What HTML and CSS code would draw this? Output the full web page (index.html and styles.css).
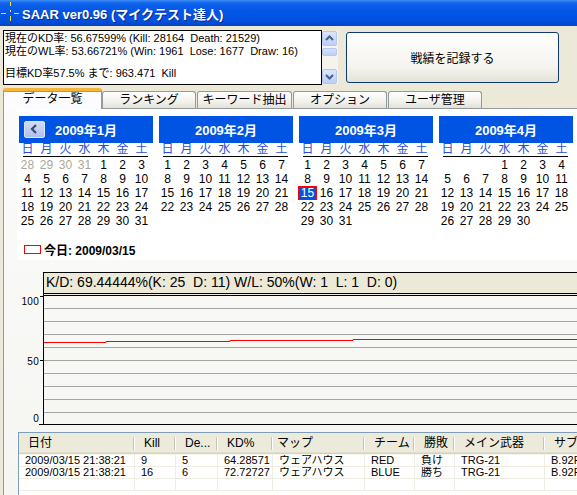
FILE: index.html
```html
<!DOCTYPE html>
<html lang="ja">
<head>
<meta charset="utf-8">
<title>SAAR ver0.96</title>
<link rel="stylesheet" href="styles.css">
</head>
<body>
<div class="titlebar">
  <svg class="app-icon" width="20" height="24" viewBox="0 0 20 24">
    <g stroke="#F2E43A" stroke-width="1">
      <line x1="1" y1="12.5" x2="6" y2="12.5"/>
      <line x1="14" y1="12.5" x2="19" y2="12.5"/>
      <line x1="10.5" y1="1" x2="10.5" y2="5"/>
      <line x1="10.5" y1="9" x2="10.5" y2="11"/>
      <line x1="10.5" y1="15" x2="10.5" y2="20"/>
    </g>
  </svg>
  <span class="title">SAAR ver0.96 (マイクテスト達人)</span>
</div>

<div class="top">
  <div class="stats">
    <div class="stats-box">
      <div class="line">現在のKD率: 56.67599% (Kill: 28164&nbsp; Death: 21529)</div>
      <div class="line">現在のWL率: 53.66721% (Win: 1961&nbsp; Lose: 1677&nbsp; Draw: 16)</div>
      <div class="blank"></div>
      <div class="line">目標KD率57.5% まで: 963.471&nbsp; Kill</div>
    </div>
    <div class="vscroll">
      <div class="sb-btn">
        <svg width="15" height="15" viewBox="0 0 15 15"><polyline points="4,9 7.5,5.5 11,9" fill="none" stroke="#4D6185" stroke-width="2"/></svg>
      </div>
      <div class="sb-thumb"></div>
      <div class="sb-track"></div>
      <div class="sb-btn">
        <svg width="15" height="15" viewBox="0 0 15 15"><polyline points="4,6 7.5,9.5 11,6" fill="none" stroke="#4D6185" stroke-width="2"/></svg>
      </div>
    </div>
  </div>
  <button class="record-btn">戦績を記録する</button>
</div>

<div class="tabs">
  <div class="tab active">データ一覧</div>
  <div class="tab">ランキング</div>
  <div class="tab wide">キーワード抽出</div>
  <div class="tab">オプション</div>
  <div class="tab">ユーザ管理</div>
</div>

<div class="panel">
  <div class="cal-area">
    <div class="calendars">
      <div class="cal">
        <div class="cal-head">
          <span class="nav-btn"><svg width="21" height="16" viewBox="0 0 21 16"><polyline points="12,4 8,8 12,12" fill="none" stroke="#3A4778" stroke-width="2.2"/></svg></span>
          2009年1月
        </div>
        <div class="dow"><span>日</span><span>月</span><span>火</span><span>水</span><span>木</span><span>金</span><span>土</span></div>
        <div class="dow-line"></div>
        <div class="days">
          <span class="other">28</span><span class="other">29</span><span class="other">30</span><span class="other">31</span><span>1</span><span>2</span><span>3</span>
          <span>4</span><span>5</span><span>6</span><span>7</span><span>8</span><span>9</span><span>10</span>
          <span>11</span><span>12</span><span>13</span><span>14</span><span>15</span><span>16</span><span>17</span>
          <span>18</span><span>19</span><span>20</span><span>21</span><span>22</span><span>23</span><span>24</span>
          <span>25</span><span>26</span><span>27</span><span>28</span><span>29</span><span>30</span><span>31</span>
        </div>
      </div>
      <div class="cal">
        <div class="cal-head">2009年2月</div>
        <div class="dow"><span>日</span><span>月</span><span>火</span><span>水</span><span>木</span><span>金</span><span>土</span></div>
        <div class="dow-line"></div>
        <div class="days">
          <span>1</span><span>2</span><span>3</span><span>4</span><span>5</span><span>6</span><span>7</span>
          <span>8</span><span>9</span><span>10</span><span>11</span><span>12</span><span>13</span><span>14</span>
          <span>15</span><span>16</span><span>17</span><span>18</span><span>19</span><span>20</span><span>21</span>
          <span>22</span><span>23</span><span>24</span><span>25</span><span>26</span><span>27</span><span>28</span>
        </div>
      </div>
      <div class="cal">
        <div class="cal-head">2009年3月</div>
        <div class="dow"><span>日</span><span>月</span><span>火</span><span>水</span><span>木</span><span>金</span><span>土</span></div>
        <div class="dow-line"></div>
        <div class="days">
          <span>1</span><span>2</span><span>3</span><span>4</span><span>5</span><span>6</span><span>7</span>
          <span>8</span><span>9</span><span>10</span><span>11</span><span>12</span><span>13</span><span>14</span>
          <span class="today-cell">15</span><span>16</span><span>17</span><span>18</span><span>19</span><span>20</span><span>21</span>
          <span>22</span><span>23</span><span>24</span><span>25</span><span>26</span><span>27</span><span>28</span>
          <span>29</span><span>30</span><span>31</span>
        </div>
      </div>
      <div class="cal">
        <div class="cal-head">2009年4月</div>
        <div class="dow"><span>日</span><span>月</span><span>火</span><span>水</span><span>木</span><span>金</span><span>土</span></div>
        <div class="dow-line"></div>
        <div class="days">
          <span></span><span></span><span></span><span>1</span><span>2</span><span>3</span><span>4</span>
          <span>5</span><span>6</span><span>7</span><span>8</span><span>9</span><span>10</span><span>11</span>
          <span>12</span><span>13</span><span>14</span><span>15</span><span>16</span><span>17</span><span>18</span>
          <span>19</span><span>20</span><span>21</span><span>22</span><span>23</span><span>24</span><span>25</span>
          <span>26</span><span>27</span><span>28</span><span>29</span><span>30</span>
        </div>
      </div>
    </div>
    <div class="today">
      <span class="today-box"></span>
      <span class="today-text">今日: 2009/03/15</span>
    </div>
  </div>

  <div class="chart">
    <div class="chart-title">K/D: 69.44444%(K: 25&nbsp; D: 11) W/L: 50%(W: 1&nbsp; L: 1&nbsp; D: 0)</div>
    <div class="chart-body">
      <div class="ylabels">
        <span>100</span>
        <span>50</span>
        <span>0</span>
      </div>
      <svg class="plot" width="538" height="130" viewBox="0 0 538 130" preserveAspectRatio="none">
        <g stroke="#A4A4A4" stroke-width="1">
          <line x1="5" y1="12.5" x2="538" y2="12.5"/>
          <line x1="5" y1="25.5" x2="538" y2="25.5"/>
          <line x1="5" y1="38.5" x2="538" y2="38.5"/>
          <line x1="5" y1="51.5" x2="538" y2="51.5"/>
          <line x1="5" y1="64.5" x2="538" y2="64.5"/>
          <line x1="5" y1="77.5" x2="538" y2="77.5"/>
          <line x1="5" y1="90.5" x2="538" y2="90.5"/>
          <line x1="5" y1="103.5" x2="538" y2="103.5"/>
          <line x1="5" y1="116.5" x2="538" y2="116.5"/>
        </g>
        <g stroke="#000" stroke-width="1">
          <line x1="4.5" y1="0" x2="4.5" y2="129"/>
          <line x1="0" y1="128.5" x2="538" y2="128.5"/>
          <line x1="1" y1="64.5" x2="4" y2="64.5"/>
          <line x1="1" y1="0.5" x2="4" y2="0.5"/>
        </g>
        <polyline points="5,46.5 67,46.5 67,45.5 191,45.5 191,44.5 314,44.5 314,43.5 538,43.5" fill="none" stroke="#FF0000" stroke-width="1"/>
      </svg>
    </div>
  </div>

  <div class="listview">
    <div class="lv-row lv-head">
      <div>日付</div><div>Kill</div><div>De...</div><div>KD%</div><div class="h-map">マップ</div><div>チーム</div><div>勝敗</div><div>メイン武器</div><div>サブ武器</div>
    </div>
    <div class="lv-row">
      <div>2009/03/15 21:38:21</div><div>9</div><div>5</div><div>64.28571</div><div>ウェアハウス</div><div>RED</div><div>負け</div><div>TRG-21</div><div>B.92F</div>
    </div>
    <div class="lv-row">
      <div>2009/03/15 21:38:21</div><div>16</div><div>6</div><div>72.72727</div><div>ウェアハウス</div><div>BLUE</div><div>勝ち</div><div>TRG-21</div><div>B.92F</div>
    </div>
    <div class="lv-row empty">
      <div></div><div></div><div></div><div></div><div></div><div></div><div></div><div></div><div></div>
    </div>
  </div>
</div>
</body>
</html>
```

FILE: styles.css
```css
* { box-sizing: border-box; }
html, body { margin: 0; padding: 0; }
body {
  width: 577px;
  height: 495px;
  overflow: hidden;
  background: #ECE9D8;
  font-family: "Liberation Sans", "Noto Sans CJK JP", sans-serif;
  font-size: 12px;
  color: #000;
}

/* title bar */
.titlebar {
  height: 26px;
  display: flex;
  align-items: center;
  background: linear-gradient(#3E8DF6 0%, #0F63EC 12%, #0556E6 40%, #0053E2 75%, #0049D2 92%, #0A44B8 100%);
}
.app-icon { flex: none; margin-right: 2px; }
.title {
  color: #fff;
  font-weight: bold;
  font-size: 13px;
  letter-spacing: 0;
  text-shadow: 1px 1px 0 #0B2B8C;
  white-space: nowrap;
}

/* top area */
.top {
  height: 61px;
  display: flex;
  padding: 4px 0 0 3px;
}
.stats { display: flex; }
.stats-box {
  width: 319px;
  height: 55px;
  border: 1px solid #000;
  background: #fff;
  padding: 1px 0 0 1px;
  font-size: 11px;
  white-space: nowrap;
  overflow: hidden;
}
.line { height: 13px; line-height: 13px; }
.blank { height: 9px; }
.vscroll {
  width: 16px;
  height: 53px;
  margin-top: 1px;
  display: flex;
  flex-direction: column;
  background: #F4F3EC;
}
.sb-btn {
  width: 15px;
  height: 15px;
  border: 1px solid #B4C6F2;
  border-radius: 2px;
  background: linear-gradient(#DCE6FD, #BCCDF6);
}
.sb-btn svg { display: block; margin: -1px; }
.sb-thumb {
  width: 15px;
  height: 8px;
  margin-top: 2px;
  border: 1px solid #B4C6F2;
  border-radius: 2px;
  background: linear-gradient(#D4E0FC, #BFCFF7);
}
.sb-track { flex: 1; }
.record-btn {
  margin: 2px 0 0 8px;
  width: 213px;
  height: 51px;
  border: 1px solid #0B3A70;
  border-radius: 3px;
  background: linear-gradient(#FFFFFF 0%, #F4F3EE 70%, #E4E2D8 100%);
  font-family: "Liberation Sans", "Noto Sans CJK JP", sans-serif;
  font-size: 12px;
  color: #000;
  padding: 0;
}

/* tabs */
.tabs {
  height: 21px;
  display: flex;
  align-items: flex-end;
  gap: 1px;
  padding-left: 3px;
}
.tab {
  width: 94px;
  height: 17px;
  border: 1px solid #919B9C;
  border-bottom: none;
  border-radius: 3px 3px 0 0;
  background: linear-gradient(#FFFFFF, #F2F1EC 60%, #E3E1D8);
  text-align: center;
  line-height: 17px;
  font-size: 12px;
  white-space: nowrap;
}
.tab.wide { width: 95px; }
.tab.active {
  width: 99px;
  height: 21px;
  margin-bottom: -1px;
  margin-right: -1px;
  border-top: 3px solid #F8B53A;
  box-shadow: inset 0 1px 0 #E68B2C;
  background: #FCFCFE;
  line-height: 16px;
  position: relative;
  z-index: 1;
}

/* panel */
.panel {
  margin-left: 3px;
  height: 387px;
  border-left: 1px solid #919B9C;
  border-top: 1px solid #919B9C;
  background: linear-gradient(#FBFBF9, #F5F5F2);
}

.cal-area {
  margin-left: 13px;
  height: 151px;
  background: #fff;
  padding: 7px 0 0 2px;
}
.calendars { display: flex; gap: 6px; }
.cal { width: 134px; flex: none; }
.cal-head {
  height: 27px;
  background: #0054E3;
  color: #fff;
  font-weight: bold;
  font-size: 13px;
  display: flex;
  align-items: center;
  justify-content: center;
  position: relative;
}
.nav-btn {
  position: absolute;
  left: 5px;
  top: 5px;
  width: 21px;
  height: 17px;
  border: 1px solid #DDE5F8;
  border-radius: 2px;
  background: linear-gradient(#D3DDF7, #AFC0EC);
}
.nav-btn svg { display: block; margin: -1px 0 0 -1px; }
.dow, .days {
  display: grid;
  grid-template-columns: repeat(7, 19px);
  margin-left: -1px;
}
.dow {
  height: 13px;
  line-height: 13px;
  color: #1F50DA;
  text-align: center;
}
.dow-line {
  height: 1px;
  background: #000;
  margin: 0 5px 0 4px;
}
.days {
  margin-top: 1px;
  grid-auto-rows: 14px;
  text-align: center;
  line-height: 14px;
}
.days .other { color: #ACA899; }
.days .today-cell {
  background: #0054E3;
  color: #fff;
  border: 1px solid #FF0000;
  line-height: 12px;
}
.today {
  display: flex;
  align-items: center;
  gap: 3px;
  margin: 14px 0 0 5px;
  height: 15px;
}
.today-box {
  width: 17px;
  height: 9px;
  border: 1px solid #FF0000;
}
.today-text { font-weight: bold; font-size: 12px; }

/* chart */
.chart { margin-top: 12px; }
.chart-title {
  margin-left: 39px;
  height: 24px;
  border-top: 1px solid #000;
  border-left: 1px solid #000;
  border-bottom: 3px double #000;
  background: #ECE9D8;
  font-size: 14px;
  line-height: 19px;
  padding-left: 2px;
  white-space: nowrap;
  overflow: hidden;
}
.chart-body { display: flex; height: 130px; }
.ylabels {
  width: 35px;
  flex: none;
  display: flex;
  flex-direction: column;
  justify-content: space-between;
  align-items: flex-end;
  font-size: 10px;
  line-height: 10px;
  padding: 1px 0 2px 0;
  letter-spacing: 0.3px;
}
.ylabels span:nth-child(2) { margin-top: 3px; }
.plot { display: block; flex: none; }

/* list view */
.listview {
  margin: 6px 0 0 14px;
  border-top: 1px solid #7F9DB9;
  border-left: 1px solid #7F9DB9;
  background: #fff;
  height: 64px;
  overflow: hidden;
}
.lv-row {
  display: grid;
  grid-template-columns: 116px 41px 42px 55px 92px 50px 40px 90px 120px;
  height: 12px;
}
.lv-row > div {
  border-right: 1px solid #EFEDE2;
  border-bottom: 1px solid #EFEDE2;
  padding-left: 6px;
  font-size: 11px;
  line-height: 11px;
  white-space: nowrap;
  overflow: hidden;
}
.lv-head {
  height: 22px;
  background: #EBEADB;
  box-shadow: inset 0 -1px 0 #F6F5EE, inset 0 -2px 0 #D6D2C2, inset 0 -3px 0 #E2DECD;
}
.lv-head > div {
  border: none;
  padding-left: 9px;
  font-size: 12px;
  line-height: 20px;
  background:
    linear-gradient(#C7C5B2, #C7C5B2) right 1px top 4px / 1px 13px no-repeat,
    linear-gradient(#FFFFFF, #FFFFFF) right 0 top 4px / 1px 13px no-repeat;
}
.lv-head > .h-map { padding-left: 4px; }
```
